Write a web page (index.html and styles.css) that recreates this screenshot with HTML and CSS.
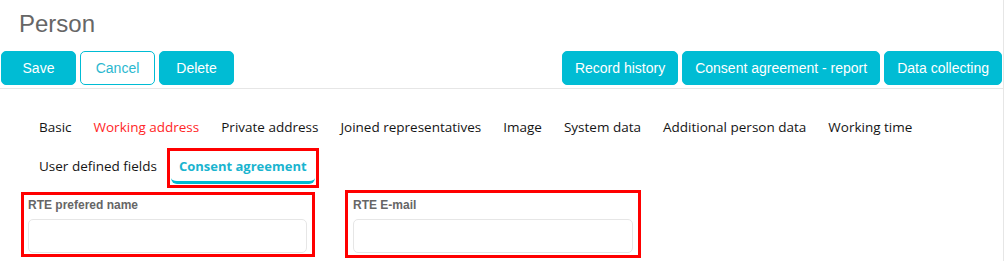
FILE: index.html
```html
<!DOCTYPE html>
<html>
<head>
<meta charset="utf-8">
<link rel="stylesheet" href="styles.css">
</head>
<body>
<div class="page">
  <div class="header">
    <h1 class="title">Person</h1>
  </div>
  <div class="toolbar">
    <div class="btn-group">
      <button class="btn">Save</button>
      <button class="btn btn-outline">Cancel</button>
      <button class="btn">Delete</button>
    </div>
    <div class="btn-group">
      <button class="btn">Record history</button>
      <button class="btn">Consent agreement - report</button>
      <button class="btn">Data collecting</button>
    </div>
  </div>
  <div class="tabs">
    <span class="tab">Basic</span>
    <span class="tab tab-error">Working address</span>
    <span class="tab">Private address</span>
    <span class="tab">Joined representatives</span>
    <span class="tab">Image</span>
    <span class="tab">System data</span>
    <span class="tab">Additional person data</span>
    <span class="tab">Working time</span>
    <span class="tab">User defined fields</span>
    <span class="tab tab-active">Consent agreement</span>
  </div>
  <div class="fields">
    <div class="field field-first">
      <label class="field-label">RTE prefered name</label>
      <input class="field-input" type="text">
    </div>
    <div class="field field-second">
      <label class="field-label">RTE E-mail</label>
      <input class="field-input" type="text">
    </div>
  </div>
</div>
</body>
</html>
```
FILE: styles.css
```css
html, body {
  margin: 0;
  padding: 0;
  background: #fff;
}
body {
  font-family: "Liberation Sans", Arial, sans-serif;
}
.page {
  width: 1003px;
  height: 261px;
  border-right: 1px solid #e6e6e6;
  overflow: hidden;
}
.header {
  padding: 10px 19px 0;
}
.title {
  margin: 0;
  font-size: 24px;
  line-height: 28px;
  font-weight: normal;
  color: #666;
}
.toolbar {
  margin-top: 13px;
  display: flex;
  justify-content: space-between;
  padding: 0 1px 3px 1px;
  border-bottom: 1px solid #e6e6e6;
}
.btn-group {
  display: flex;
  gap: 4px;
}
.btn {
  box-sizing: border-box;
  height: 34px;
  min-width: 75px;
  padding: 0 12px;
  border: 1px solid #00bcd4;
  border-radius: 5px;
  background: #00bcd4;
  color: #fff;
  font-family: "Liberation Sans", Arial, sans-serif;
  font-size: 14px;
  cursor: pointer;
}
.btn-outline {
  background: #fff;
  color: #2bb8cf;
}
.tabs {
  display: flex;
  flex-wrap: wrap;
  padding: 23px 0 0 28px;
  font-family: "Open Sans", sans-serif;
  font-size: 13.5px;
  line-height: 18px;
}
.tab {
  position: relative;
  margin: 0 3px 6px;
  padding: 6px 8px;
  border-bottom: 3px solid transparent;
  color: #151515;
  white-space: nowrap;
}
.tab-error {
  color: #ff2626;
}
.tab-active {
  font-size: 13px;
  font-weight: bold;
  color: #1ab4cf;
  border-bottom-color: #00bcd4;
  border-radius: 0 0 6px 6px;
}
.tab-active::after {
  content: "";
  position: absolute;
  left: -4px;
  right: -4px;
  top: -3px;
  bottom: -7px;
  border: 3px solid #f00;
}
.fields {
  display: flex;
  align-items: flex-start;
  gap: 30px;
  padding-left: 21px;
}
.field {
  display: flex;
  flex-direction: column;
  border: 3px solid #f00;
}
.field-first {
  margin-top: 2px;
  width: 279px;
  padding: 3px 5px 1px 4px;
}
.field-second {
  width: 280px;
  padding: 5px 5px 2px 5px;
}
.field-label {
  font-size: 12px;
  line-height: 14px;
  font-weight: bold;
  color: #666;
  margin-bottom: 7px;
}
.field-input {
  box-sizing: border-box;
  width: 100%;
  height: 34px;
  margin: 0;
  border: 1px solid #e6e6e6;
  border-radius: 5px;
  background: #fff;
}
```
